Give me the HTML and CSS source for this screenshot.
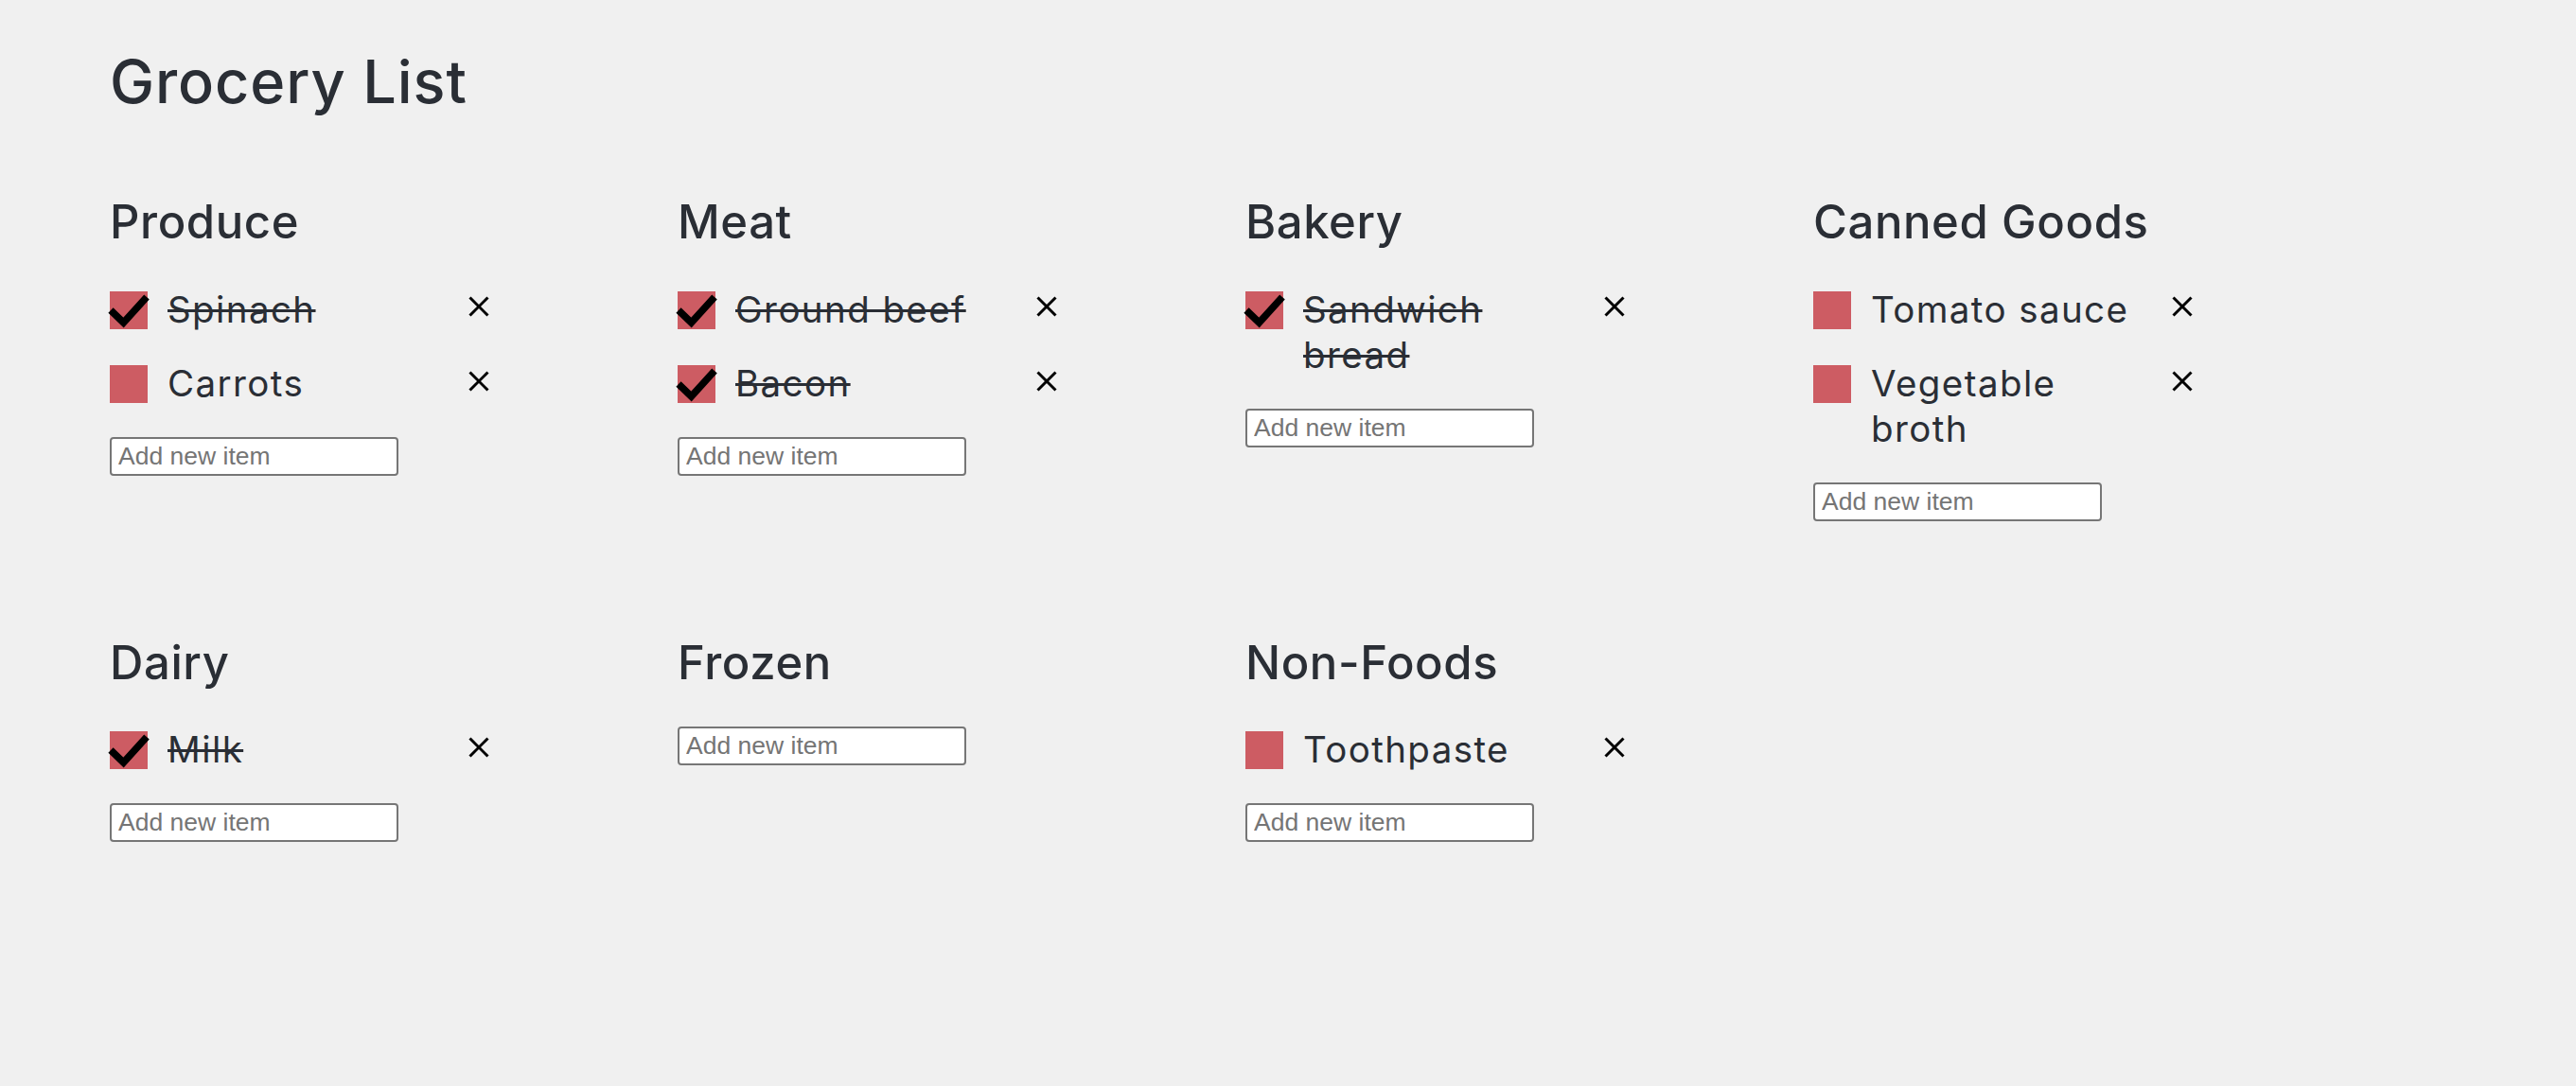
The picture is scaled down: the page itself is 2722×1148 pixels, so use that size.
FILE: index.html
```html
<!DOCTYPE html>
<html lang="en">
<head>
<meta charset="utf-8">
<title>Grocery List</title>
<link rel="stylesheet" href="styles.css">
</head>
<body>
<div class="page">
  <h1 class="title">Grocery List</h1>
  <div class="grid">
    <section class="card">
      <h2 class="card-title">Produce</h2>
      <ul class="items">
        <li class="item done">
          <span class="box"><svg viewBox="0 0 40 40" class="check"><polyline points="1,20 14.5,33 39,6" /></svg></span>
          <span class="text">Spinach</span>
          <span class="remove"><svg viewBox="0 0 22 22"><line x1="1.5" y1="1.5" x2="20.5" y2="20.5"/><line x1="20.5" y1="1.5" x2="1.5" y2="20.5"/></svg></span>
        </li>
        <li class="item">
          <span class="box"></span>
          <span class="text">Carrots</span>
          <span class="remove"><svg viewBox="0 0 22 22"><line x1="1.5" y1="1.5" x2="20.5" y2="20.5"/><line x1="20.5" y1="1.5" x2="1.5" y2="20.5"/></svg></span>
        </li>
      </ul>
      <input class="add" type="text" placeholder="Add new item">
    </section>
    <section class="card">
      <h2 class="card-title">Meat</h2>
      <ul class="items">
        <li class="item done">
          <span class="box"><svg viewBox="0 0 40 40" class="check"><polyline points="1,20 14.5,33 39,6" /></svg></span>
          <span class="text">Ground beef</span>
          <span class="remove"><svg viewBox="0 0 22 22"><line x1="1.5" y1="1.5" x2="20.5" y2="20.5"/><line x1="20.5" y1="1.5" x2="1.5" y2="20.5"/></svg></span>
        </li>
        <li class="item done">
          <span class="box"><svg viewBox="0 0 40 40" class="check"><polyline points="1,20 14.5,33 39,6" /></svg></span>
          <span class="text">Bacon</span>
          <span class="remove"><svg viewBox="0 0 22 22"><line x1="1.5" y1="1.5" x2="20.5" y2="20.5"/><line x1="20.5" y1="1.5" x2="1.5" y2="20.5"/></svg></span>
        </li>
      </ul>
      <input class="add" type="text" placeholder="Add new item">
    </section>
    <section class="card">
      <h2 class="card-title">Bakery</h2>
      <ul class="items">
        <li class="item done">
          <span class="box"><svg viewBox="0 0 40 40" class="check"><polyline points="1,20 14.5,33 39,6" /></svg></span>
          <span class="text">Sandwich bread</span>
          <span class="remove"><svg viewBox="0 0 22 22"><line x1="1.5" y1="1.5" x2="20.5" y2="20.5"/><line x1="20.5" y1="1.5" x2="1.5" y2="20.5"/></svg></span>
        </li>
      </ul>
      <input class="add" type="text" placeholder="Add new item">
    </section>
    <section class="card">
      <h2 class="card-title">Canned Goods</h2>
      <ul class="items">
        <li class="item">
          <span class="box"></span>
          <span class="text">Tomato sauce</span>
          <span class="remove"><svg viewBox="0 0 22 22"><line x1="1.5" y1="1.5" x2="20.5" y2="20.5"/><line x1="20.5" y1="1.5" x2="1.5" y2="20.5"/></svg></span>
        </li>
        <li class="item">
          <span class="box"></span>
          <span class="text">Vegetable broth</span>
          <span class="remove"><svg viewBox="0 0 22 22"><line x1="1.5" y1="1.5" x2="20.5" y2="20.5"/><line x1="20.5" y1="1.5" x2="1.5" y2="20.5"/></svg></span>
        </li>
      </ul>
      <input class="add" type="text" placeholder="Add new item">
    </section>
    <section class="card">
      <h2 class="card-title">Dairy</h2>
      <ul class="items">
        <li class="item done">
          <span class="box"><svg viewBox="0 0 40 40" class="check"><polyline points="1,20 14.5,33 39,6" /></svg></span>
          <span class="text">Milk</span>
          <span class="remove"><svg viewBox="0 0 22 22"><line x1="1.5" y1="1.5" x2="20.5" y2="20.5"/><line x1="20.5" y1="1.5" x2="1.5" y2="20.5"/></svg></span>
        </li>
      </ul>
      <input class="add" type="text" placeholder="Add new item">
    </section>
    <section class="card">
      <h2 class="card-title">Frozen</h2>
      <input class="add" type="text" placeholder="Add new item">
    </section>
    <section class="card">
      <h2 class="card-title">Non-Foods</h2>
      <ul class="items">
        <li class="item">
          <span class="box"></span>
          <span class="text">Toothpaste</span>
          <span class="remove"><svg viewBox="0 0 22 22"><line x1="1.5" y1="1.5" x2="20.5" y2="20.5"/><line x1="20.5" y1="1.5" x2="1.5" y2="20.5"/></svg></span>
        </li>
      </ul>
      <input class="add" type="text" placeholder="Add new item">
    </section>
  </div>
</div>
</body>
</html>
```

FILE: styles.css
```css
html, body {
  margin: 0;
  padding: 0;
  background: #f0f0f0;
}

body {
  font-family: Inter, "Noto Sans", "DejaVu Sans", sans-serif;
  color: #2a2e35;
}

.page {
  padding: 48px 0 0 116px;
}

.title {
  margin: 0;
  font-size: 63px;
  line-height: 76px;
  font-weight: 500;
  letter-spacing: 0.9px;
}

.grid {
  margin-top: 81px;
  display: grid;
  grid-template-columns: repeat(4, 540px);
  column-gap: 60px;
  row-gap: 119.5px;
  align-items: start;
}

.card {
  display: flex;
  flex-direction: column;
  align-items: flex-start;
}

.card-title {
  margin: 0 0 38.5px 0;
  font-size: 49px;
  line-height: 59px;
  font-weight: 500;
  letter-spacing: 0.6px;
}

.items {
  list-style: none;
  margin: 0 0 3px 0;
  padding: 0;
}

.item {
  display: flex;
  align-items: flex-start;
  margin-bottom: 30.3px;
  font-size: 38.5px;
  line-height: 48px;
  letter-spacing: 1.4px;
  font-weight: 400;
}

.box {
  flex: none;
  position: relative;
  width: 40px;
  height: 40px;
  margin-top: 5.2px;
  margin-right: 21px;
  background: #cd5c63;
}

.check {
  position: absolute;
  left: 0;
  top: 0;
  width: 40px;
  height: 40px;
  overflow: visible;
}

.check polyline {
  fill: none;
  stroke: #000;
  stroke-width: 7.5;
  stroke-linejoin: miter;
}

.text {
  flex: none;
  width: 290px;
}

.done .text {
  text-decoration: line-through;
  text-decoration-thickness: 3px;
}

.remove {
  flex: none;
  width: 22px;
  height: 22px;
  margin-left: 28px;
  margin-top: 10.8px;
}

.remove svg {
  display: block;
  width: 22px;
  height: 22px;
}

.remove line {
  stroke: #000;
  stroke-width: 3;
}

.add {
  box-sizing: border-box;
  width: 305px;
  height: 41px;
  margin: 0;
  padding: 0 7px;
  border: 2px solid #767676;
  border-radius: 4px;
  background: #fff;
  font-family: "Liberation Sans", Arial, sans-serif;
  font-size: 26.5px;
  color: #000;
}

.add::placeholder {
  color: #757575;
}
```
